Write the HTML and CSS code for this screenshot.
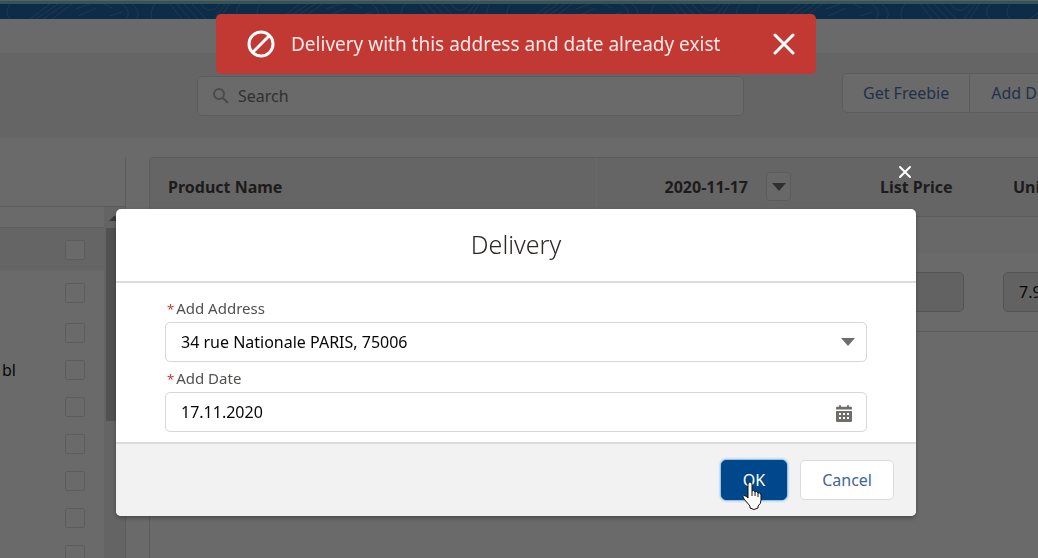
FILE: index.html
```html
<!DOCTYPE html>
<html lang="en">
<head>
    <meta charset="UTF-8">
    <meta name="viewport" content="width=device-width, initial-scale=1.0">
    <title>Delivery</title>
    <link rel="stylesheet" href="styles.css">
</head>
<body>

<!-- Page under the dialog -->
<div class="page">
    <div class="top-line"></div>
    <svg class="banner" aria-hidden="true">
        <defs>
            <pattern id="contours" width="250" height="15" patternUnits="userSpaceOnUse">
                <path d="M10 0q-6 9 0 15M30 15l20-15M36 15l22-15M43 15l22-15M52 15l20-15M76 5l14-5M78 12l18-8M104 0l8 4M110 12l12-4M122 0q10 7 4 15M132 0q9 7 5 15M155 0q-6 8-3 15M170 0l12 15M177 0l13 15M184 0l14 15M192 0l14 15M201 0q8 13 19 0M214 15l11-15M220 15l9-15M240 0q-7 9 0 15"/>
            </pattern>
        </defs>
        <rect width="100%" height="100%" fill="url(#contours)"/>
    </svg>
    <div class="nav-space"></div>

    <div class="toolbar">
        <div class="search">
            <svg class="search-icon" viewBox="0 0 18 18" aria-hidden="true">
                <circle cx="7" cy="7" r="5"/>
                <path d="M11 11l5 5"/>
            </svg>
            <input type="text" id="search" placeholder="Search" aria-label="Search">
        </div>
        <div class="button-group">
            <button type="button">Get Freebie</button>
            <button type="button">Add Delivery</button>
        </div>
    </div>

    <div class="content">
        <div class="sidebar">
            <div class="sidebar-head"></div>
            <div class="sidebar-body">
                <div class="sidebar-list">
                    <div class="list-gap"></div>
                    <label class="list-row tall selected"><span></span><input type="checkbox"></label>
                    <label class="list-row tall"><span></span><input type="checkbox"></label>
                    <label class="list-row"><span></span><input type="checkbox"></label>
                    <label class="list-row"><span>bl</span><input type="checkbox"></label>
                    <label class="list-row"><span></span><input type="checkbox"></label>
                    <label class="list-row"><span></span><input type="checkbox"></label>
                    <label class="list-row"><span></span><input type="checkbox"></label>
                    <label class="list-row"><span></span><input type="checkbox"></label>
                    <label class="list-row"><span></span><input type="checkbox"></label>
                </div>
                <div class="scrollbar">
                    <div class="scroll-up"></div>
                    <div class="scroll-thumb"></div>
                </div>
            </div>
        </div>

        <div class="products">
            <table>
                <thead>
                    <tr>
                        <th class="col-name">Product Name</th>
                        <th class="col-date">
                            <div class="date-head">
                                2020-11-17
                                <button type="button" class="menu-btn" aria-label="Date menu"><span class="arrow"></span></button>
                            </div>
                        </th>
                        <th class="col-list">List Price</th>
                        <th class="col-unit">Unit Price</th>
                    </tr>
                </thead>
                <tbody>
                    <tr class="group-row"><td colspan="4"></td></tr>
                    <tr class="item-row">
                        <td></td>
                        <td></td>
                        <td class="list-cell"><input type="text" aria-label="List price" disabled></td>
                        <td class="unit-cell"><input type="text" aria-label="Unit price" value="7.90" disabled></td>
                    </tr>
                </tbody>
            </table>
        </div>
    </div>
</div>

<div class="backdrop"></div>

<!-- Delivery dialog -->
<div class="modal" role="dialog" aria-labelledby="modal-title">
    <button type="button" class="modal-close" aria-label="Close">
        <svg viewBox="0 0 14 14" aria-hidden="true"><path d="M2 2l10 10M12 2l-10 10"/></svg>
    </button>
    <div class="modal-header">
        <h2 id="modal-title">Delivery</h2>
    </div>
    <div class="modal-body">
        <label for="address"><span class="required">*</span>Add Address</label>
        <div class="field">
            <select id="address">
                <option>34 rue Nationale PARIS, 75006</option>
            </select>
            <span class="arrow"></span>
        </div>
        <label for="date"><span class="required">*</span>Add Date</label>
        <div class="field">
            <input type="text" id="date" value="17.11.2020">
            <svg class="calendar" viewBox="0 0 16 17" aria-hidden="true">
                <path fill-rule="evenodd" d="M1 1.700h2V1q0-1 1-1t1 1v.7h6V1q0-1 1-1t1 1v.7h2q1 0 1 1V4.500H0V2.700q0-1 1-1zM0 6h16v10q0 1-1 1H1q-1 0-1-1zM3 8v2h2V8zm4 0v2h2V8zm4 0v2h2V8zM3 12v2h2v-2zm4 0v2h2v-2zm4 0v2h2v-2z"/>
            </svg>
        </div>
    </div>
    <div class="modal-footer">
        <button type="button" class="btn-ok">OK</button>
        <button type="button" class="btn-cancel">Cancel</button>
        <svg class="pointer" viewBox="0 0 22 31" aria-hidden="true">
            <path d="M7 16V4q0-2 2-2t2 2v7q2-2 3 1q2-2 3 1q3-1 3 2v5q0 4-3 6v2q-4 3-8 0v-2l-6-7q-2-3 0-3.500q2 0 4 2.500z"/>
            <path d="M11 11v5M14 12v4M17 13v4"/>
        </svg>
    </div>
</div>

<!-- Error toast -->
<div class="toast" role="alert">
    <svg class="ban" viewBox="0 0 28 28" aria-hidden="true">
        <circle cx="14" cy="14" r="12"/>
        <path d="M6 22l16-16"/>
    </svg>
    <span class="toast-text">Delivery with this address and date already exist</span>
    <button type="button" class="toast-close" aria-label="Close">
        <svg viewBox="0 0 22 22" aria-hidden="true"><path d="M2 2l18 18M20 2l-18 18"/></svg>
    </button>
</div>

</body>
</html>
```
FILE: styles.css
```css
* {
    box-sizing: border-box;
}

body {
    margin: 0;
    height: 100vh;
    overflow: hidden;
    font-family: "Noto Sans", "Open Sans", sans-serif;
    font-size: 16px;
    color: #080707;
    background-color: white;
}

button, input, select {
    font-family: inherit;
    font-size: 16px;
    margin: 0;
}

.page {
    display: flex;
    flex-direction: column;
    height: 100vh;
    overflow: hidden;
}

/* Header */
.top-line {
    flex: none;
    height: 4px;
    background-color: #72cdd0;
    border-top: 1px solid #d9dfe0;
}

.banner {
    display: block;
    flex: none;
    width: 100%;
    height: 15px;
    background-color: #1664a8;
}

.banner path {
    fill: none;
    stroke: #3f83bd;
    stroke-width: 1;
}

.nav-space {
    flex: none;
    height: 34px;
}

/* Toolbar */
.toolbar {
    flex: none;
    display: flex;
    align-items: flex-start;
    height: 85px;
    padding: 20px 0 0 197px;
    background-color: #f3f2f2;
}

.search {
    position: relative;
    flex: 0 0 547px;
    margin-top: 3px;
}

.search input {
    width: 100%;
    height: 40px;
    padding: 0 16px 0 40px;
    background-color: white;
    border: 1px solid #dddbda;
    border-radius: 5px;
}

.search input::placeholder {
    color: #706e6b;
    opacity: 1;
}

.search-icon {
    position: absolute;
    left: 15px;
    top: 11px;
    width: 18px;
    height: 18px;
    fill: none;
    stroke: #b0adab;
    stroke-width: 2;
}

.button-group {
    display: flex;
    flex: none;
    margin-left: 98px;
}

.button-group button {
    height: 40px;
    padding: 0 20px;
    color: #466fac;
    white-space: nowrap;
    background-color: white;
    border: 1px solid #dddbda;
}

.button-group button:first-child {
    border-radius: 5px 0 0 5px;
}

.button-group button + button {
    padding-left: 21px;
    border-left: 0;
}

/* Content */
.content {
    flex: 1;
    display: flex;
    gap: 23px;
    min-height: 0;
    padding-top: 19px;
}

.sidebar {
    flex: 0 0 126px;
    display: flex;
    flex-direction: column;
    border-right: 1px solid #dddbda;
}

.sidebar-head {
    flex: none;
    height: 50px;
    border-bottom: 1px solid #dddbda;
}

.sidebar-body {
    flex: 1;
    display: flex;
    min-height: 0;
}

.sidebar-list {
    flex: 1;
    overflow: hidden;
}

.list-gap {
    height: 21px;
    border-bottom: 1px solid #dddbda;
}

.list-row {
    display: flex;
    align-items: center;
    justify-content: space-between;
    height: 37px;
    padding: 0 19px 0 2px;
}

.list-row.tall {
    height: 43px;
}

.list-row.selected {
    background-color: #f3f2f2;
}

.list-row input {
    appearance: none;
    width: 20px;
    height: 20px;
    margin: 0;
    background-color: white;
    border: 1px solid #dddbda;
    border-radius: 2px;
}

.scrollbar {
    width: 21px;
    background-color: #f1f1f1;
}

.scroll-up {
    height: 21px;
    padding: 9px 5px;
}

.scroll-up::before {
    content: "";
    display: block;
    border: 5px solid transparent;
    border-top: 0;
    border-bottom-color: #8a8a8a;
}

.scroll-thumb {
    height: 193px;
    margin: 0 2px;
    background-color: #c1c1c1;
}

.products {
    flex: 1;
    min-width: 0;
    overflow: hidden;
    border: 1px solid #dddbda;
    border-width: 1px 0 0 1px;
    border-radius: 5px 0 0 0;
}

.products table {
    width: 1010px;
    table-layout: fixed;
    border-collapse: collapse;
}

.products th {
    height: 58px;
    padding: 0 18px;
    text-align: left;
    color: #3e3e3c;
    background-color: #f3f2f2;
    border-bottom: 1px solid #dddbda;
}

.products td {
    padding: 0 8px;
}

.products .col-name {
    width: 446px;
    border-right: 1px solid #fff;
}

.col-date {
    width: 224px;
}

.products .col-list {
    width: 166px;
    padding-left: 60px;
    padding-right: 0;
}

.products .col-unit {
    padding-left: 27px;
}

.date-head {
    display: flex;
    align-items: center;
    justify-content: flex-end;
    gap: 18px;
    padding-right: 11px;
}

.menu-btn {
    display: flex;
    align-items: center;
    justify-content: center;
    width: 25px;
    height: 29px;
    padding: 0;
    background-color: #fafafa;
    border: 1px solid #dddbda;
    border-radius: 4px;
}

.arrow {
    width: 0;
    height: 0;
    border: 7px solid transparent;
    border-top: 8px solid #706e6b;
    border-bottom: 0;
}

.group-row td {
    height: 37px;
    background-color: #fafaf9;
}

.item-row td {
    height: 78px;
    border-bottom: 1px solid #dddbda;
}

.item-row .list-cell {
    padding-right: 22px;
}

.item-row .unit-cell {
    padding-left: 17px;
}

.item-row input {
    width: 100%;
    height: 40px;
    padding: 0 15px;
    color: #080707;
    background-color: #ecebea;
    border: 1px solid #c9c7c5;
    border-radius: 5px;
}

/* Overlay */
.backdrop {
    position: fixed;
    inset: 0;
    background-color: rgba(8, 7, 7, 0.6);
}

.modal {
    position: fixed;
    top: 209px;
    left: calc(50% - 403px);
    width: 800px;
    background-color: white;
    border-radius: 5px;
    box-shadow: 0 2px 4px rgba(0, 0, 0, 0.3);
}

.modal-close {
    position: absolute;
    top: -44px;
    right: 4px;
    width: 14px;
    height: 14px;
    padding: 0;
    background: none;
    border: none;
}

.modal-close svg, .toast-close svg {
    display: block;
    width: 100%;
    height: 100%;
    stroke: white;
    stroke-width: 2;
    stroke-linecap: round;
}

.modal-header {
    padding: 17px 20px 19px;
    text-align: center;
    border-bottom: 2px solid #dddbda;
}

.modal-header h2 {
    margin: 0;
    font-size: 25px;
    font-weight: 300;
    line-height: 36px;
    color: #2b2826;
}

.modal-body {
    padding: 15px 49px 10px;
}

.modal-body label {
    display: block;
    margin-bottom: 4px;
    padding-left: 2px;
    font-size: 15px;
    line-height: 20px;
    color: #51504e;
}

.required {
    margin-right: 2px;
    font-size: 13px;
    line-height: 1;
    color: #c23934;
}

.field {
    position: relative;
    margin-bottom: 6px;
}

.field:last-child {
    margin-bottom: 0;
}

.field input, .field select {
    display: block;
    appearance: none;
    width: 100%;
    height: 40px;
    padding: 0 15px;
    color: #080707;
    background-color: white;
    border: 1px solid #d8d6d5;
    border-radius: 5px;
}

.field .arrow {
    position: absolute;
    top: 16px;
    right: 12px;
}

.calendar {
    position: absolute;
    top: 13px;
    right: 15px;
    width: 16px;
    height: 17px;
    fill: #706e6b;
}

.modal-footer {
    position: relative;
    display: flex;
    justify-content: flex-end;
    gap: 13px;
    padding: 16px 22px;
    background-color: #f2f2f2;
    border-top: 2px solid #dddbda;
    border-radius: 0 0 5px 5px;
}

.modal-footer button {
    height: 40px;
    padding: 0 21px;
    border-radius: 5px;
}

.btn-ok {
    color: white;
    background-color: #00478c;
    border: 1px solid #00478c;
    box-shadow: 0 0 3px #0070d2;
}

.btn-cancel {
    color: #3f6599;
    background-color: white;
    border: 1px solid #dddbda;
}

.pointer {
    position: absolute;
    top: 36px;
    right: 153px;
    width: 22px;
    height: 31px;
    fill: white;
    stroke: #111;
    stroke-linejoin: round;
}

/* Toast */
.toast {
    position: fixed;
    top: 14px;
    left: calc(50% - 303px);
    display: flex;
    align-items: center;
    width: 600px;
    height: 60px;
    padding: 0 21px 0 31px;
    color: #ffe9e7;
    background-color: #c23934;
    border-radius: 5px;
}

.ban {
    width: 28px;
    height: 28px;
    margin-right: 16px;
    fill: none;
    stroke: white;
    stroke-width: 3;
}

.toast-text {
    flex: 1;
    font-size: 19px;
    white-space: nowrap;
}

.toast-close {
    width: 22px;
    height: 22px;
    padding: 0;
    background: none;
    border: none;
}

.toast-close svg {
    stroke-width: 3;
}
```
